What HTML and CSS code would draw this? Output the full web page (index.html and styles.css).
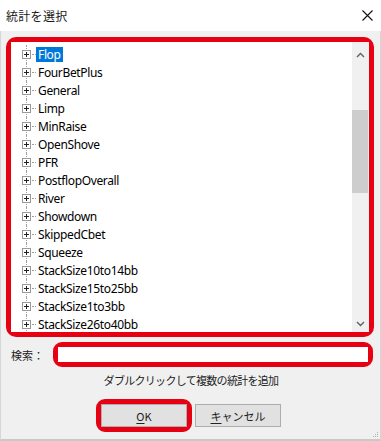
FILE: index.html
```html
<!DOCTYPE html>
<html lang="ja">
<head>
<meta charset="utf-8">
<link rel="stylesheet" href="styles.css">
</head>
<body>
<div class="window">
  <div class="titlebar">
    <span class="title">統計を選択</span>
    <svg class="close" width="11" height="11" viewBox="0 0 11 11"><path d="M0.5 0.5 L10.5 10.5 M10.5 0.5 L0.5 10.5" stroke="#111" stroke-width="1.1" fill="none"/></svg>
  </div>
  <div class="content">
    <div class="mark list-mark">
      <div class="listbox">
        <div class="tree">
          <div class="row"><span class="twig"><span class="box"></span></span><span class="hline"></span><span class="label selected">Flop</span></div>
          <div class="row"><span class="twig"><span class="box"></span></span><span class="hline"></span><span class="label">FourBetPlus</span></div>
          <div class="row"><span class="twig"><span class="box"></span></span><span class="hline"></span><span class="label">General</span></div>
          <div class="row"><span class="twig"><span class="box"></span></span><span class="hline"></span><span class="label">Limp</span></div>
          <div class="row"><span class="twig"><span class="box"></span></span><span class="hline"></span><span class="label">MinRaise</span></div>
          <div class="row"><span class="twig"><span class="box"></span></span><span class="hline"></span><span class="label">OpenShove</span></div>
          <div class="row"><span class="twig"><span class="box"></span></span><span class="hline"></span><span class="label">PFR</span></div>
          <div class="row"><span class="twig"><span class="box"></span></span><span class="hline"></span><span class="label">PostflopOverall</span></div>
          <div class="row"><span class="twig"><span class="box"></span></span><span class="hline"></span><span class="label">River</span></div>
          <div class="row"><span class="twig"><span class="box"></span></span><span class="hline"></span><span class="label">Showdown</span></div>
          <div class="row"><span class="twig"><span class="box"></span></span><span class="hline"></span><span class="label">SkippedCbet</span></div>
          <div class="row"><span class="twig"><span class="box"></span></span><span class="hline"></span><span class="label">Squeeze</span></div>
          <div class="row"><span class="twig"><span class="box"></span></span><span class="hline"></span><span class="label">StackSize10to14bb</span></div>
          <div class="row"><span class="twig"><span class="box"></span></span><span class="hline"></span><span class="label">StackSize15to25bb</span></div>
          <div class="row"><span class="twig"><span class="box"></span></span><span class="hline"></span><span class="label">StackSize1to3bb</span></div>
          <div class="row"><span class="twig"><span class="box"></span></span><span class="hline"></span><span class="label">StackSize26to40bb</span></div>
        </div>
        <div class="scrollbar">
          <div class="sb-up"><svg width="9" height="6" viewBox="0 0 9 6"><path d="M1 5 L4.5 1.5 L8 5" stroke="#606060" stroke-width="1.4" fill="none"/></svg></div>
          <div class="sb-track"><div class="sb-thumb"></div></div>
          <div class="sb-down"><svg width="9" height="6" viewBox="0 0 9 6"><path d="M1 1 L4.5 4.5 L8 1" stroke="#606060" stroke-width="1.4" fill="none"/></svg></div>
        </div>
      </div>
    </div>
    <div class="search-row">
      <span class="search-label">検索：</span>
      <div class="mark search-mark"><div class="search-input"></div></div>
    </div>
    <div class="hint">ダブルクリックして複数の統計を追加</div>
    <div class="buttons">
      <div class="mark btn-mark"><button class="btn"><u>O</u>K</button></div>
      <button class="btn"><u>キ</u>ャンセル</button>
    </div>
  </div>
  <svg class="grip" width="6" height="6" viewBox="0 0 6 6"><rect x="4" y="0" width="1" height="1" fill="#b0b0b0"/><rect x="2" y="2" width="1" height="1" fill="#b0b0b0"/><rect x="4" y="2" width="1" height="1" fill="#b0b0b0"/><rect x="0" y="4" width="1" height="1" fill="#b0b0b0"/><rect x="2" y="4" width="1" height="1" fill="#b0b0b0"/><rect x="4" y="4" width="1" height="1" fill="#b0b0b0"/></svg>
</div>
</body>
</html>
```

FILE: styles.css
```css
* { box-sizing: border-box; }
html, body { margin: 0; padding: 0; }
body {
  width: 381px;
  height: 441px;
  overflow: hidden;
  font-family: "Noto Sans", "Noto Sans CJK JP", sans-serif;
  color: #000;
  background: #f0f0f0;
}
.window {
  position: relative;
  width: 381px;
  height: 441px;
  display: flex;
  flex-direction: column;
  background: #f0f0f0;
  border-left: 1px solid #d6d6d6;
  border-right: 1px solid #d6d6d6;
  border-bottom: 2px solid #c8c8c8;
}
.titlebar {
  height: 31px;
  flex: none;
  background: #fff;
  display: flex;
  align-items: center;
  justify-content: space-between;
  padding: 0 8px 0 6px;
  margin: 0 -1px;
}
.title {
  font-family: "Noto Sans CJK JP", sans-serif;
  font-size: 12px;
  letter-spacing: 0.3px;
  color: #1a1a1a;
}
.close { display: block; margin-top: -1px; }
.content {
  flex: 1;
  display: flex;
  flex-direction: column;
  padding: 6px 6px 0 5px;
}
.mark {
  border: 5px solid #e60012;
  border-radius: 10px;
}
.list-mark {
  height: 300px;
  flex: none;
}
.listbox {
  height: 100%;
  display: flex;
  background: #fff;
  overflow: hidden;
}
.tree {
  flex: 1;
  padding: 3px 0 0 11px;
  overflow: hidden;
}
.row {
  height: 18px;
  display: flex;
  align-items: center;
  font-size: 12px;
  letter-spacing: -0.35px;
}
.twig {
  position: relative;
  width: 9px;
  height: 18px;
  flex: none;
  display: flex;
  align-items: center;
}
.twig::before {
  content: "";
  position: absolute;
  left: 4px;
  top: 0;
  bottom: 0;
  border-left: 1px dotted #a0a0a0;
}
.box {
  position: relative;
  width: 9px;
  height: 9px;
  border: 1px solid #9a9a9a;
  background: #fff;
}
.box::before {
  content: "";
  position: absolute;
  left: 1px;
  top: 3px;
  width: 5px;
  height: 1px;
  background: #222;
}
.box::after {
  content: "";
  position: absolute;
  left: 3px;
  top: 1px;
  width: 1px;
  height: 5px;
  background: #222;
}
.hline {
  width: 4px;
  margin-left: 1px;
  border-top: 1px dotted #a0a0a0;
  flex: none;
}
.label {
  padding: 0 2px;
  line-height: 15px;
  white-space: nowrap;
}
.selected {
  background: #0078d7;
  color: #fff;
}
.scrollbar {
  width: 17px;
  flex: none;
  background: #f0f0f0;
  display: flex;
  flex-direction: column;
}
.sb-up {
  height: 24px;
  display: flex;
  align-items: center;
  justify-content: center;
  padding-top: 2px;
}
.sb-down {
  height: 17px;
  display: flex;
  align-items: center;
  justify-content: center;
}
.sb-up svg, .sb-down svg { display: block; }
.sb-track { flex: 1; }
.sb-thumb {
  margin: 44px 1px 0 0;
  height: 83px;
  background: #cdcdcd;
}
.search-row {
  display: flex;
  align-items: center;
  margin-top: 5px;
  height: 25px;
}
.search-label {
  width: 47px;
  padding-left: 5px;
  font-family: "Noto Sans CJK JP", sans-serif;
  font-size: 11px;
  color: #222;
  flex: none;
}
.search-mark {
  flex: 1;
  height: 25px;
  margin-right: 1px;
  border-radius: 9px;
}
.search-input {
  height: 100%;
  background: #fff;
}
.hint {
  margin-top: 6px;
  text-align: center;
  font-family: "Noto Sans CJK JP", sans-serif;
  font-size: 11px;
  line-height: 14px;
  letter-spacing: -0.7px;
  color: #222;
  padding-left: 2px;
}
.buttons {
  margin-top: 17px;
  display: flex;
  justify-content: center;
  gap: 8px;
  padding-left: 2px;
}
.btn {
  width: 86px;
  height: 23px;
  margin: 0;
  padding: 0;
  background: #e1e1e1;
  border: 1px solid #adadad;
  font-family: "Noto Sans CJK JP", sans-serif;
  font-size: 11px;
  color: #222;
}
.btn u { text-decoration-thickness: 1px; text-underline-offset: 2px; }
.btn-mark {
  margin: -5px;
  border-radius: 9px;
}
.btn-mark .btn { display: block; }
.grip {
  position: absolute;
  right: 1px;
  bottom: 1px;
}
```
